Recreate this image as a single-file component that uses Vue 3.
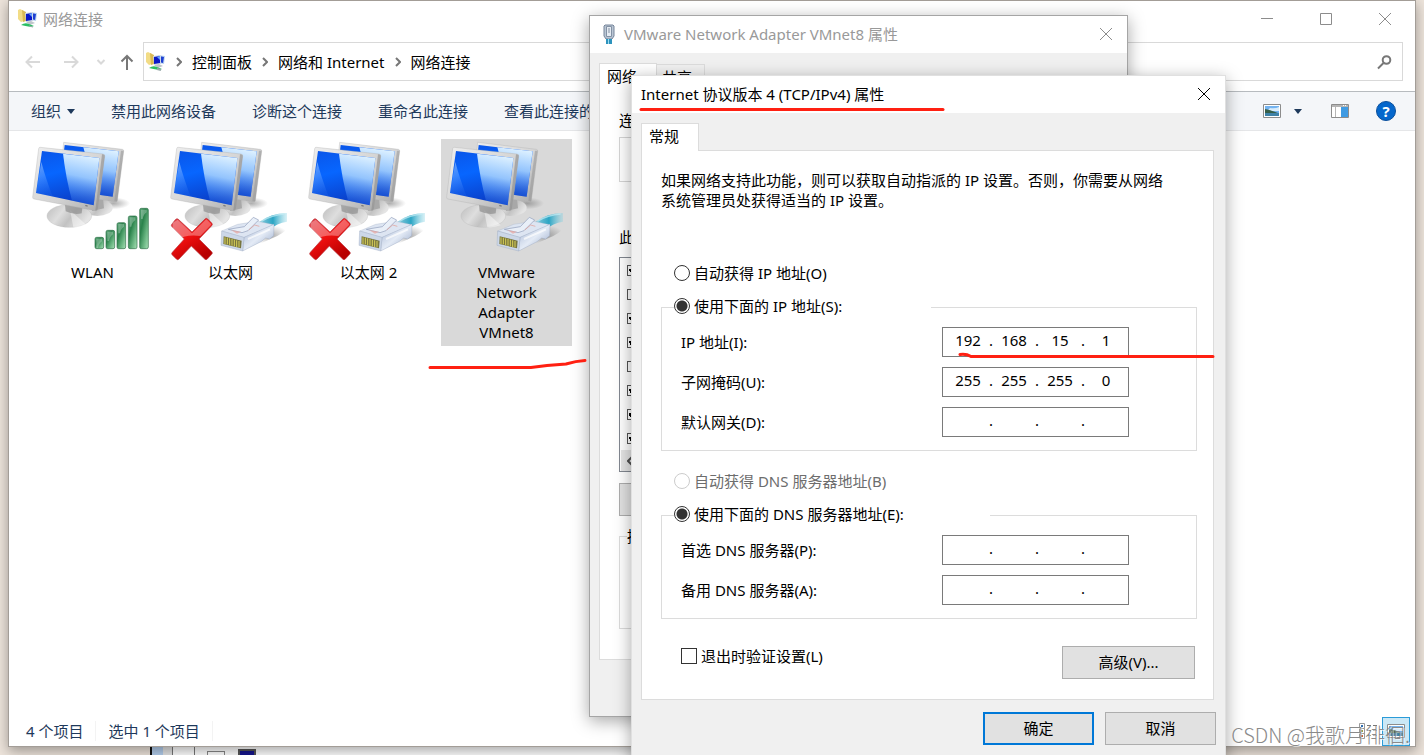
<template>
  <div class="desktop">
    <!-- window that peeks out under the explorer -->
    <div class="behind"><i></i><b></b><b></b><span></span><em></em></div>

    <section class="explorer">
      <header class="title-bar">
        <svg class="net-icon" viewBox="0 0 20 20"><use href="#net" /></svg>
        <span>网络连接</span>
        <div class="window-buttons">
          <button aria-label="最小化"><svg viewBox="0 0 14 14"><path d="M1 6.500h12" /></svg></button>
          <button aria-label="最大化"><svg viewBox="0 0 14 14"><path d="M1.500 1.500h11v11h-11z" /></svg></button>
          <button aria-label="关闭"><svg viewBox="0 0 14 14"><path d="M1 1l12 12M13 1L1 13" /></svg></button>
        </div>
      </header>

      <nav class="address-row">
        <button aria-label="后退"><svg viewBox="0 0 16 16"><path d="M15 8H1.500M7 2.500L1.500 8L7 13.500" /></svg></button>
        <button aria-label="前进"><svg viewBox="0 0 16 16"><path d="M1 8h13.500M9 2.500L14.500 8L9 13.500" /></svg></button>
        <button class="recent" aria-label="最近"><svg viewBox="0 0 10 16"><path d="M1.500 6L5 9.500L8.500 6" /></svg></button>
        <button class="up" aria-label="向上"><svg viewBox="0 0 14 16"><path d="M7 16V2M1.500 7.500L7 2l5.500 5.500" /></svg></button>
        <div class="address">
          <svg class="net-icon" viewBox="0 0 20 20"><use href="#net" /></svg>
          <template v-for="crumb in crumbs" :key="crumb">
            <svg class="crumb-arrow" viewBox="0 0 6 10"><path d="M1 1l4 4l-4 4" /></svg>
            <a href="#">{{ crumb }}</a>
          </template>
        </div>
        <div class="search">
          <input type="search" aria-label="搜索" />
          <svg viewBox="0 0 16 16"><circle cx="10.500" cy="6" r="3.800" /><path d="M7.500 9L2 14.500" /></svg>
        </div>
      </nav>

      <div class="toolbar">
        <button v-for="(command, index) in commands" :key="command">
          {{ command }}<i v-if="index == 0" class="caret"></i>
        </button>
        <div class="view-tools">
          <button aria-label="视图"><svg width="18" height="14" viewBox="0 0 18 14"><use href="#photo" /></svg></button>
          <button class="more" aria-label="更多选项"><i class="caret"></i></button>
          <button class="pane" aria-label="预览窗格">
            <svg width="18" height="14" viewBox="0 0 18 14">
              <path d="M.5.500h17v13H.5z" fill="#fff" stroke="#8c8c8c" />
              <path d="M1 1h16v2H1z" fill="#b5b5b5" />
              <path d="M4.500 3v10" stroke="#b5b5b5" />
              <path d="M10 3h7v10h-7z" fill="#3f9be3" />
              <path d="M12 1.500h1M14 1.500h1" stroke="#fff" />
            </svg>
          </button>
          <button class="help" aria-label="帮助">?</button>
        </div>
      </div>

      <ul class="connections">
        <li v-for="item in connections" :key="item.name" :class="{ selected: item.selected }">
          <svg class="big-icon" viewBox="21 27 393 369">
            <ellipse cx="280" cy="220" rx="50" ry="18" fill="url(#shade)" />
            <ellipse cx="232" cy="233" rx="46" ry="25" fill="url(#base)" />
            <path d="M222 195l26 0l4 40l-36 8z" fill="#a8a8a8" />
            <path d="M131 37l176 21q5 1 4 6l-19 148q-1 5-6 4L116 190z" fill="url(#frame)" stroke="#aaa" />
            <path d="M134 45l162 19l-18 136l-160-22z" fill="url(#screen)" />
            <path d="M190 52l106 12l-18 136l-50-7z" fill="url(#gloss)" />
            <path d="M303 62l8 0l-20 152l-8-2z" fill="#999" opacity=".6" />
            <ellipse cx="148" cy="258" rx="67" ry="34" fill="url(#base)" stroke="#b5b5b5" />
            <path d="M150 240l50 46q-22 8-40 6z" fill="#fff" opacity=".45" />
            <path d="M134 214l54 10l-3 26q-22 6-48-6z" fill="#8f8f8f" opacity=".7" />
            <path d="M61 52l188 20q6 1 5 7l-20 157q-1 7-8 6L42 207q-5-1-4-6l18-145q1-5 5-4z" fill="url(#frame)" stroke="#aaa" />
            <path d="M246 73q9 0 8 7l-20 155q-1 7-8 6z" fill="#8c8c8c" opacity=".6" />
            <path d="M66 63l172 21l-17 142L48 189z" fill="url(#screen)" />
            <path d="M129 71l109 13l-17 142l-65-14q-18-66-27-141z" fill="url(#gloss)" />
            <path d="M64 96q12 46 34 104l-50-11z" fill="url(#wedge)" />
            <path d="M196 227l7 1" stroke="#666" stroke-width="3" />

            <g v-if="item.kind == 'wifi'" fill="url(#bar)" stroke="#2f7049" stroke-width="2">
              <rect v-for="bar in bars" :key="bar.x" :x="bar.x" :y="bar.y" width="26" :height="356 - bar.y" rx="5" />
              <path
                v-for="bar in bars"
                :key="'shine' + bar.x"
                :d="`M${bar.x + 4} ${bar.y + 4}h17v8q-10 6-12 20l-5 0z`"
                fill="#fff"
                stroke="none"
                opacity=".28"
              />
            </g>

            <g v-else>
              <path d="M290 348l68-30q30-16 32-30l-42-2z" fill="url(#shade)" />
              <path d="M303 277q34-27 84-28l0 26q-30 4-54 25z" fill="url(#cable)" />
              <path d="M310 274q32-20 70-22" fill="none" stroke="#c4edf5" stroke-width="4" opacity=".7" />
              <path d="M191 303l48-20l60-9l49 10l-90 39z" fill="#dde5f2" stroke="#a3afc6" />
              <path d="M258 322l90-39l-1 34l-12 10l-12-3l-14 11l-55 28z" fill="url(#plug)" stroke="#8f9dba" />
              <path d="M191 303l67 19l-4 41l-65-17z" fill="#ccd7e8" stroke="#8f9dba" />
              <path d="M197 319l54 13l-2 23l-53-13z" fill="#77753f" />
              <path d="M201 322v20M208 323v20M215 325v20M222 327v20M229 329v20M236 331v20M243 333v19" stroke="#d9d058" stroke-width="3" />
              <path d="M211 298l48-8l27-28l16 8l-32 32l-18 6z" fill="#e9eff8" stroke="#8f9dba" stroke-width="2" />
              <path d="M219 300l30 5l-12 6z" fill="#e9a49c" opacity=".7" />
              <path d="M272 300l18-15l14 4" fill="none" stroke="#e39a90" stroke-width="2" />
              <path d="M270 327l66-29" stroke="#fff" stroke-width="6" opacity=".7" />
            </g>

            <g v-if="item.off" stroke-linejoin="round">
              <path d="M60 267l42 39l39-39q4-4 8 0l12 12q4 4 0 8l-38 40l38 38q4 4 0 8l-13 14q-4 4-8 0l-40-39l-37 39q-4 4-8 0l-12-12q-4-4 0-8l36-40l-37-37q-4-4 0-8l10-13q4-4 8-2z" fill="url(#cross)" stroke="#b7333b" stroke-width="2" />
              <path d="M59 269l43 41l41-41q2-2 4 0l12 12q2 2 0 4l-32 33q-45-5-66 11l-17-10L44 283q-1-3 1-5z" fill="#fff" opacity=".33" />
            </g>
          </svg>
          <span>{{ item.name }}</span>
        </li>
      </ul>

      <footer class="status-bar">
        <span>4 个项目</span>
        <span>选中 1 个项目</span>
        <div class="status-views">
          <button class="details" aria-label="详细信息">
            <svg width="20" height="17" viewBox="0 0 20 17">
              <path d="M.5.500h5v5h-5zM.5 5.500h5v5h-5zM.5 10.500h5v5h-5z" fill="#fff" stroke="#999" />
              <path d="M2 3h2" stroke="#336fb0" stroke-width="2" /><path d="M2 8h2" stroke="#72893f" stroke-width="2" /><path d="M2 13h2" stroke="#b4472f" stroke-width="2" />
              <path d="M8 2.500h4M14 2.500h4M8 7.500h4M14 7.500h4M8 12.500h4M14 12.500h4" stroke="#777" />
            </svg>
          </button>
          <button class="thumbs" aria-label="大图标"><svg width="18" height="14" viewBox="0 0 18 14"><use href="#photo" /></svg></button>
        </div>
      </footer>
    </section>

    <section class="dialog adapter">
      <header class="dialog-title">
        <svg class="plug-icon" viewBox="0 0 14 20">
          <path d="M3 1h8l1 1v10l-2 3H4l-2-3V2z" fill="#b9c5d3" stroke="#76859a" />
          <path d="M4.500 2.500h5v10h-5z" fill="#e5ebf2" stroke="#8391a4" />
          <path d="M7 4v5" fill="none" stroke="#8391a4" />
          <path d="M4 15h6v5H4z" fill="#2d93bd" /><path d="M6.500 15v5" stroke="#9bdcf2" />
        </svg>
        <span>VMware Network Adapter VMnet8 属性</span>
        <button aria-label="关闭"><svg viewBox="0 0 14 14"><path d="M1 1l12 12M13 1L1 13" /></svg></button>
      </header>
      <div class="tabs"><button class="active">网络</button><button>共享</button></div>
      <div class="panel">
        <p>连接时</p>
        <div class="device"><i></i></div>
        <p>此连接</p>
        <div class="components">
          <input v-for="(used, index) in components" :key="index" type="checkbox" :checked="used" :aria-label="`项目 ${index + 1}`" />
          <div class="scroll"><svg viewBox="0 0 8 12"><path d="M6 1L1 6l5 5" /></svg></div>
        </div>
        <button class="push" aria-label="安装"></button>
        <fieldset><legend>描述</legend></fieldset>
      </div>
    </section>

    <section class="dialog tcpip">
      <header class="dialog-title">
        <span>Internet 协议版本 4 (TCP/IPv4) 属性</span>
        <button aria-label="关闭"><svg viewBox="0 0 14 14"><path d="M1 1l12 12M13 1L1 13" /></svg></button>
      </header>
      <div class="tabs"><button class="active">常规</button></div>
      <div class="panel">
        <p>如果网络支持此功能，则可以获取自动指派的 IP 设置。否则，你需要从网络系统管理员处获得适当的 IP 设置。</p>

        <label class="choice"><input v-model="ipMode" type="radio" name="ip" value="auto" />自动获得 IP 地址(O)</label>
        <fieldset class="ip-group">
          <legend><label class="choice"><input v-model="ipMode" type="radio" name="ip" value="manual" />使用下面的 IP 地址(S):</label></legend>
          <div v-for="row in ipRows" :key="row.id" class="field">
            <label :for="row.id + 0">{{ row.label }}</label>
            <div class="ip-box">
              <template v-for="(part, index) in row.parts" :key="index">
                <i v-if="index > 0">.</i>
                <input :id="row.id + index" v-model="row.parts[index]" type="text" maxlength="3" :aria-label="`${row.label} ${index + 1}`" />
              </template>
            </div>
          </div>
        </fieldset>

        <label class="choice disabled"><input v-model="dnsMode" type="radio" name="dns" value="auto" disabled />自动获得 DNS 服务器地址(B)</label>
        <fieldset class="dns-group">
          <legend><label class="choice"><input v-model="dnsMode" type="radio" name="dns" value="manual" />使用下面的 DNS 服务器地址(E):</label></legend>
          <div v-for="row in dnsRows" :key="row.id" class="field">
            <label :for="row.id + 0">{{ row.label }}</label>
            <div class="ip-box">
              <template v-for="(part, index) in row.parts" :key="index">
                <i v-if="index > 0">.</i>
                <input :id="row.id + index" v-model="row.parts[index]" type="text" maxlength="3" :aria-label="`${row.label} ${index + 1}`" />
              </template>
            </div>
          </div>
        </fieldset>

        <div class="panel-end">
          <label class="validate"><input v-model="validate" type="checkbox" />退出时验证设置(L)</label>
          <button class="push">高级(V)...</button>
        </div>
      </div>
      <footer class="actions">
        <button class="push default">确定</button>
        <button class="push">取消</button>
      </footer>
    </section>

    <!-- red pen strokes over the windows -->
    <svg class="pen" width="1424" height="755" viewBox="0 0 1424 755">
      <path d="M641 109.500H943" />
      <path d="M960 354.500q6-1 11 2H1213" />
      <path d="M430 367.500H531L547 365.500L566 364Q576 361 585 360.500" />
    </svg>
    <div class="watermark">CSDN @我歌月徘徊.</div>

    <!-- shared gradients and small icons -->
    <svg class="defs" width="0" height="0">
      <defs>
        <linearGradient id="frame" x1="0" y1="0" x2="1" y2="1"><stop offset="0" stop-color="#efefef" /><stop offset=".6" stop-color="#d2d2d2" /><stop offset="1" stop-color="#a9a9a9" /></linearGradient>
        <linearGradient id="screen" x1="0" y1="0" x2=".3" y2="1"><stop offset="0" stop-color="#0a55e8" /><stop offset=".45" stop-color="#0766ff" /><stop offset="1" stop-color="#0a3fc9" /></linearGradient>
        <linearGradient id="gloss" x1=".6" y1="0" x2=".45" y2="1"><stop offset="0" stop-color="#e3f4ff" /><stop offset=".45" stop-color="#a3d0ff" stop-opacity=".9" /><stop offset="1" stop-color="#3f86f5" stop-opacity=".15" /></linearGradient>
        <linearGradient id="wedge" x1="0" y1="0" x2=".2" y2="1"><stop offset="0" stop-color="#b5d8ff" stop-opacity=".6" /><stop offset="1" stop-color="#5f9cff" stop-opacity=".1" /></linearGradient>
        <linearGradient id="base" x1="0" y1="0" x2="1" y2=".4"><stop offset="0" stop-color="#bcbcbc" /><stop offset=".4" stop-color="#dedede" /><stop offset=".65" stop-color="#c2c2c2" /><stop offset="1" stop-color="#e4e4e4" /></linearGradient>
        <radialGradient id="shade"><stop offset="0" stop-color="#777" stop-opacity=".6" /><stop offset="1" stop-color="#777" stop-opacity="0" /></radialGradient>
        <linearGradient id="bar" x1="0" y1="0" x2="1" y2="1"><stop offset="0" stop-color="#5aa577" /><stop offset=".35" stop-color="#2a824b" /><stop offset=".7" stop-color="#6db885" /><stop offset="1" stop-color="#a9e0b7" /></linearGradient>
        <linearGradient id="cross" x1="0" y1="0" x2=".6" y2="1"><stop offset="0" stop-color="#e0404a" /><stop offset=".5" stop-color="#f01010" /><stop offset="1" stop-color="#b80000" /></linearGradient>
        <linearGradient id="cable"><stop offset="0" stop-color="#8ccbdc" /><stop offset=".5" stop-color="#2ba5c4" /><stop offset="1" stop-color="#7fd0e2" stop-opacity=".3" /></linearGradient>
        <linearGradient id="plug" x1="0" y1="0" x2="1" y2="1"><stop offset="0" stop-color="#a5b5d2" /><stop offset=".5" stop-color="#e4ebf6" /><stop offset="1" stop-color="#8fa2c4" /></linearGradient>
        <g id="net">
          <path d="M0 1l2-1l4 2v10l-3 1l-3-3z" fill="#f2dc86" /><path d="M4 1l4 2v9l-3 1z" fill="#d9b954" />
          <path d="M12 3l7 1l-1 8l-6-1z" fill="#b9d2f0" /><path d="M13 4l5 1l-1 6l-4-1z" fill="#1d3fd2" />
          <path d="M7 4l8-1v9l-7 1z" fill="#cfd9e6" /><path d="M8 5l6-1v7l-6 1z" fill="#0a18c8" /><path d="M11 5l3-1v4z" fill="#6aa4ff" />
          <path d="M8 13l5-1l4 2l-5 2z" fill="#bfc5cb" /><path d="M3 16q4-3 8-1l5 2l-3 1q-6-1-10-2z" fill="#2bbf63" /><path d="M11 17l4 1" stroke="#9aa" />
        </g>
        <g id="photo">
          <path d="M.5.500h17v13H.5z" fill="#fff" stroke="#8c8c8c" />
          <path d="M2 2h14v10H2z" fill="#73b3f0" /><path d="M7 4q5 1 9-1v4H4z" fill="#d8ecfb" />
          <path d="M2 5q6 1 13 4H2z" fill="#365f49" /><path d="M2 9h14v3H2z" fill="#3e82a8" />
        </g>
      </defs>
    </svg>
  </div>
</template>

<script setup>
import { ref } from "vue";

const crumbs = ["控制面板", "网络和 Internet", "网络连接"];
const commands = ["组织", "禁用此网络设备", "诊断这个连接", "重命名此连接", "查看此连接的状态"];

const connections = ref([
  { name: "WLAN", kind: "wifi" },
  { name: "以太网", kind: "cable", off: true },
  { name: "以太网 2", kind: "cable", off: true },
  { name: "VMware Network Adapter VMnet8", kind: "cable", selected: true },
]);

/* signal bars of the WLAN icon */
const bars = [
  { x: 225, y: 322 },
  { x: 258, y: 301 },
  { x: 291, y: 278 },
  { x: 325, y: 258 },
  { x: 359, y: 235 },
];

const components = [true, false, true, true, false, true, true, true];

const ipMode = ref("manual");
const dnsMode = ref("manual");
const validate = ref(false);

const ipRows = ref([
  { id: "ip", label: "IP 地址(I):", parts: ["192", "168", "15", "1"] },
  { id: "mask", label: "子网掩码(U):", parts: ["255", "255", "255", "0"] },
  { id: "gateway", label: "默认网关(D):", parts: ["", "", "", ""] },
]);

const dnsRows = ref([
  { id: "dns", label: "首选 DNS 服务器(P):", parts: ["", "", "", ""] },
  { id: "backup", label: "备用 DNS 服务器(A):", parts: ["", "", "", ""] },
]);
</script>

<style>
body {
  margin: 0;
  overflow: hidden;
}
</style>

<style scoped>
.desktop {
  position: relative;
  height: 100vh;
  overflow: hidden;
  background: #ede4db;
  color: #000;
  font: 15px/20px "Noto Sans", "Noto Sans CJK SC", sans-serif;
}

.desktop * {
  box-sizing: border-box;
}

button {
  display: flex;
  align-items: center;
  justify-content: center;
  padding: 0;
  border: 0;
  background: none;
  color: inherit;
  font: inherit;
}

button svg {
  display: block;
}

input {
  margin: 0;
  font: inherit;
}

p {
  margin: 0;
}

.defs {
  position: absolute;
}

/* strip under the explorer */
.behind {
  position: absolute;
  left: 150px;
  bottom: 0;
  display: flex;
  align-items: flex-end;
  width: 560px;
  height: 9px;
  border-left: 2px solid #111;
  background: #fff;
}

.behind i {
  width: 11px;
  height: 9px;
  background: #b3cdec;
}

.behind b {
  width: 22px;
  height: 9px;
  border-right: 1px solid #777;
}

.behind b:first-of-type {
  width: 10px;
  background: #e4e4e4;
}

.behind span {
  width: 18px;
  height: 4px;
  margin-left: 12px;
  border: 1px solid #888;
  border-bottom: 0;
}

.behind em {
  width: 18px;
  height: 6px;
  margin-left: 13px;
  border: 2px solid #555;
  border-bottom: 0;
  background: #16168c;
}

/* explorer */
.explorer {
  position: absolute;
  top: 0;
  right: 8px;
  bottom: 8px;
  left: 8px;
  display: flex;
  flex-direction: column;
  border: 1px solid #a39d97;
  background: #fff;
  box-shadow: 0 4px 12px rgba(0, 0, 0, 0.35);
}

.title-bar {
  display: flex;
  align-items: center;
  gap: 5px;
  height: 37px;
  padding: 0 23px 2px 9px;
  color: #999;
}

.net-icon {
  width: 20px;
  height: 20px;
}

.window-buttons {
  display: flex;
  gap: 45px;
  margin-left: auto;
}

.window-buttons svg,
.dialog-title button svg {
  width: 14px;
  height: 14px;
  fill: none;
  stroke: #8c8c8c;
}

.address-row {
  display: flex;
  align-items: center;
  height: 53px;
  padding: 0 12px 6px 16px;
}

.address-row svg {
  fill: none;
  stroke: #d9d9d9;
  stroke-width: 2;
}

.address-row > button svg {
  width: 16px;
  height: 16px;
}

.address-row > button + button {
  margin-left: 22px;
}

.address-row > button.recent {
  margin-right: -8px;
  margin-left: 17px;
}

.address-row > .recent svg {
  width: 10px;
}

.address-row > .up svg {
  width: 14px;
  stroke: #777;
}

.address {
  display: flex;
  flex: 1;
  align-items: center;
  height: 39px;
  margin-left: 9px;
  padding-left: 2px;
  border: 1px solid #d9d9d9;
}

.address .net-icon {
  stroke: none;
}

.address a {
  color: #000;
  text-decoration: none;
}

.address .crumb-arrow {
  width: 6px;
  height: 10px;
  margin: 0 10px;
  stroke: #777;
}

.search {
  display: flex;
  align-items: center;
  width: 340px;
  height: 39px;
  margin-left: 12px;
  padding-right: 10px;
  border: 1px solid #d9d9d9;
}

.search input {
  flex: 1;
  min-width: 0;
  border: 0;
  outline: 0;
  background: none;
}

.search svg {
  width: 16px;
  height: 16px;
  stroke: #777;
}

.toolbar {
  display: flex;
  align-items: center;
  gap: 36px;
  height: 40px;
  padding: 0 19px 0 22px;
  border-top: 1px solid #b7bbbf;
  border-bottom: 1px solid #e5e6e8;
  background: #f4f6f9;
  color: #1e395b;
}

.caret {
  width: 0;
  height: 0;
  border: 4px solid transparent;
  border-top: 5px solid #1e395b;
  border-bottom: 0;
}

.toolbar > button .caret {
  margin-left: 6px;
}

.view-tools {
  display: flex;
  align-items: center;
  margin-left: auto;
}

.view-tools .more {
  margin: 0 29px 0 13px;
}

.view-tools .help {
  width: 20px;
  height: 20px;
  margin-left: 27px;
  border: 1px solid #0a4f9c;
  border-radius: 50%;
  background: #0567cc;
  color: #fff;
  font-weight: 700;
}

.connections {
  display: flex;
  flex: 1;
  align-items: flex-start;
  gap: 7px;
  margin: 0;
  padding: 8px 18px;
  list-style: none;
}

.connections li {
  display: flex;
  flex-direction: column;
  align-items: center;
  width: 131px;
  padding-bottom: 4px;
  text-align: center;
}

.connections li.selected {
  background: #d9d9d9;
}

.big-icon {
  width: 131px;
  height: 123px;
}

.connections span {
  width: 80px;
}

.status-bar {
  display: flex;
  align-items: center;
  height: 30px;
  padding: 0 5px 0 17px;
  color: #1e395b;
}

.status-bar span {
  margin-right: 12px;
  padding-right: 12px;
  border-right: 1px solid #f3f3f3;
}

.status-views {
  display: flex;
  align-items: center;
  gap: 3px;
  margin-left: auto;
}

.thumbs {
  width: 28px;
  height: 29px;
  border: 1px solid #2a9bd8;
  background: #cbe8f6;
}

/* dialogs */
.dialog {
  position: absolute;
  border: 1px solid #a5a5a5;
  background: #f0f0f0;
  box-shadow: 0 4px 16px rgba(0, 0, 0, 0.35);
}

.dialog-title {
  display: flex;
  align-items: center;
  height: 37px;
  padding: 0 14px 2px 9px;
  background: #fff;
}

.dialog-title button {
  margin-left: auto;
}

.tabs {
  display: flex;
  align-items: flex-end;
  padding: 10px 9px 0;
}

.tabs button {
  height: 26px;
  padding: 0 12px 2px 5px;
  border: 1px solid #dcdcdc;
  border-bottom: 0;
  border-left: 0;
}

.tabs .active {
  position: relative;
  width: 58px;
  height: 28px;
  margin-bottom: -1px;
  padding: 0 12px 4px 0;
  border-left: 1px solid #dcdcdc;
  background: #fff;
}

.panel {
  margin: 0 11px 0 9px;
  border: 1px solid #dcdcdc;
  background: #fff;
}

fieldset {
  min-width: 0;
  margin: 0;
  padding: 0;
  border: 1px solid #dcdcdc;
}

legend {
  padding: 0;
}

.push {
  height: 33px;
  padding-bottom: 2px;
  border: 1px solid #adadad;
  background: #e1e1e1;
}

/* adapter properties */
.adapter {
  top: 15px;
  left: 589px;
  width: 539px;
  padding-bottom: 56px;
}

.adapter .dialog-title {
  color: #999;
}

.plug-icon {
  width: 14px;
  height: 20px;
  margin: 0 8px 0 3px;
}

.adapter .panel {
  padding: 19px;
  padding-bottom: 30px;
}

.device {
  height: 45px;
  margin: 7px 0 45px;
  padding: 10px 11px;
  border: 1px solid #d5d5d5;
}

.device i {
  display: block;
  width: 14px;
  height: 10px;
  border: 1px solid #999;
}

.components {
  display: flex;
  flex-direction: column;
  gap: 13px;
  margin: 10px 0 11px;
  padding: 7px 0 0 7px;
  border: 1px solid #828790;
}

.components input {
  width: 11px;
  height: 11px;
  border: 1px solid #555;
  appearance: none;
}

.components input:checked {
  background: linear-gradient(45deg, transparent 30%, #000 30%, #000 70%, transparent 70%) 1px 3px / 5px 5px no-repeat;
}

.scroll {
  height: 21px;
  margin: -7px 0 0 -6px;
  padding: 5px 6px;
  background: #e5e5e5;
}

.scroll svg {
  display: block;
  width: 8px;
  height: 12px;
  fill: none;
  stroke: #505050;
  stroke-width: 2;
}

.adapter .push {
  width: 150px;
}

.adapter fieldset {
  height: 103px;
  margin-top: 10px;
}

.adapter legend {
  margin-left: 7px;
}

/* TCP/IPv4 properties */
.tcpip {
  top: 75px;
  left: 631px;
  width: 595px;
  padding-bottom: 20px;
  border-color: #e0e0e0;
}

.tcpip .dialog-title button svg {
  stroke: #000;
}

.tcpip .panel {
  padding: 19px 16px 20px 19px;
}

.tcpip p {
  width: 504px;
  margin-bottom: 53px;
}

.choice {
  display: flex;
  align-items: center;
  gap: 4px;
}

.panel > .choice {
  margin-left: 13px;
}

.choice input {
  width: 16px;
  height: 16px;
  border: 1px solid #333;
  border-radius: 50%;
  background: #fff;
  appearance: none;
}

.choice input:checked {
  background: radial-gradient(circle, #333 5px, #fff 6px);
}

.choice.disabled {
  color: #6d6d6d;
}

.choice.disabled input {
  border-color: #ccc;
}

fieldset .choice {
  height: 20px;
  padding-bottom: 2px;
}

.ip-group,
.dns-group {
  padding: 10px 0 13px 19px;
}

.tcpip .ip-group {
  margin: 14px 0 20px;
}

.tcpip .dns-group {
  margin: 14px 0 27px;
}

.tcpip legend {
  width: 257px;
  margin-left: -7px;
}

.tcpip .dns-group legend {
  width: 316px;
}

.field {
  display: flex;
  align-items: center;
  justify-content: space-between;
  padding-right: 67px;
}

.field + .field {
  margin-top: 10px;
}

.ip-box {
  display: flex;
  align-items: center;
  width: 187px;
  height: 30px;
  padding: 0 0 4px 5px;
  border: 1px solid #7a7a7a;
}

.ip-box input {
  width: 40px;
  padding: 0;
  border: 0;
  outline: 0;
  background: none;
  text-align: center;
}

.ip-box i {
  width: 6px;
  font-style: normal;
  text-align: center;
}

.panel-end {
  display: flex;
  justify-content: space-between;
  padding: 0 2px 0 20px;
}

.validate {
  display: flex;
  align-items: center;
  gap: 4px;
  height: 20px;
}

.validate input {
  width: 16px;
  height: 16px;
  border: 1px solid #333;
  appearance: none;
}

.validate input:checked {
  background: #333;
}

.panel-end .push {
  width: 133px;
}

.actions {
  display: flex;
  justify-content: flex-end;
  gap: 11px;
  padding: 12px 9px 0;
}

.actions .push {
  width: 111px;
}

.push.default {
  border: 2px solid #0078d7;
}

/* annotations */
.pen {
  position: absolute;
  top: 0;
  left: 0;
  fill: none;
  stroke: #ff2012;
  stroke-width: 3;
  stroke-linecap: round;
  pointer-events: none;
}

.watermark {
  position: absolute;
  right: 14px;
  bottom: 7px;
  color: #8a8a8a;
  font: 300 20px/26px "Noto Sans CJK SC", sans-serif;
  text-shadow: 1px 1px 0 rgba(255, 255, 255, 0.6);
}
</style>
